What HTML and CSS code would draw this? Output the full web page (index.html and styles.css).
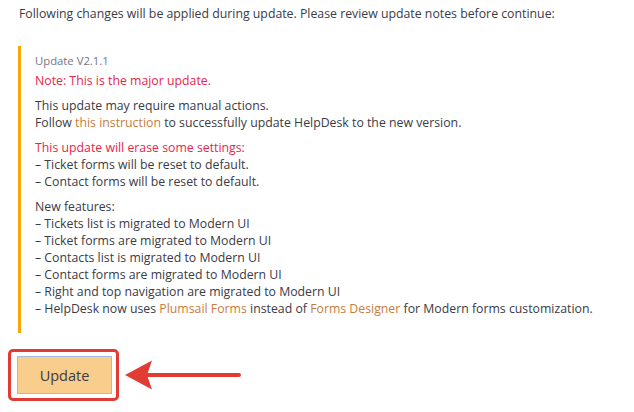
FILE: index.html
```html
<!DOCTYPE html>
<html>
<head>
<meta charset="utf-8">
<link rel="stylesheet" href="styles.css">
</head>
<body>
<div class="page">
  <p class="intro">Following changes will be applied during update. Please review update notes before continue:</p>
  <div class="notes">
    <div class="version">Update V2.1.1</div>
    <p class="warn first">Note: This is the major update.</p>
    <p>This update may require manual actions.<br>Follow <a class="link">this instruction</a> to successfully update HelpDesk to the new version.</p>
    <p><span class="warn">This update will erase some settings:</span><br>– Ticket forms will be reset to default.<br>– Contact forms will be reset to default.</p>
    <p>New features:<br>– Tickets list is migrated to Modern UI<br>– Ticket forms are migrated to Modern UI<br>– Contacts list is migrated to Modern UI<br>– Contact forms are migrated to Modern UI<br>– Right and top navigation are migrated to Modern UI<br>– HelpDesk now uses <a class="link">Plumsail Forms</a> instead of <a class="link">Forms Designer</a> for Modern forms customization.</p>
  </div>
  <div class="actions">
    <div class="highlight">
      <button class="btn">Update</button>
    </div>
    <svg class="arrow" width="120" height="32" viewBox="0 0 120 32">
      <line x1="24" y1="16" x2="115" y2="16" stroke="#e23b33" stroke-width="4" stroke-linecap="round"/>
      <path d="M1 16 L28 1.5 L23 16 L28 30.5 Z" fill="#e23b33"/>
    </svg>
  </div>
</div>
</body>
</html>
```
FILE: styles.css
```css
html, body {
  margin: 0;
  padding: 0;
  background: #ffffff;
}
body {
  font-family: "Open Sans", "Noto Sans", sans-serif;
  font-size: 12.3px;
  line-height: 17px;
  color: #3b3b45;
}
.page {
  padding: 5px 0 0 0;
}
.intro {
  margin: 0 0 24px 19px;
}
.notes {
  margin-left: 18px;
  border-left: 3px solid #f9a602;
  padding: 6px 0 16px 14px;
}
.version {
  font-size: 11.3px;
  color: #767680;
}
.notes p {
  margin: 8px 0 0 0;
}
.notes p.first {
  margin-top: 3px;
}
.warn {
  color: #e8264c;
}
.link {
  color: #c67c40;
  text-decoration: none;
}
.actions {
  display: flex;
  align-items: center;
  margin: 16px 0 0 8px;
}
.highlight {
  border: 3px solid #e23b33;
  border-radius: 5px;
  padding: 4px 4px 4px 6px;
}
.btn {
  display: block;
  width: 95px;
  height: 38px;
  background: #f9cd8b;
  border: 1px solid #9fbbe8;
  font-family: "Open Sans", "Noto Sans", sans-serif;
  font-size: 14.5px;
  color: #3b3b45;
  padding: 0;
}
.arrow {
  display: block;
  margin-left: 5px;
}
```
